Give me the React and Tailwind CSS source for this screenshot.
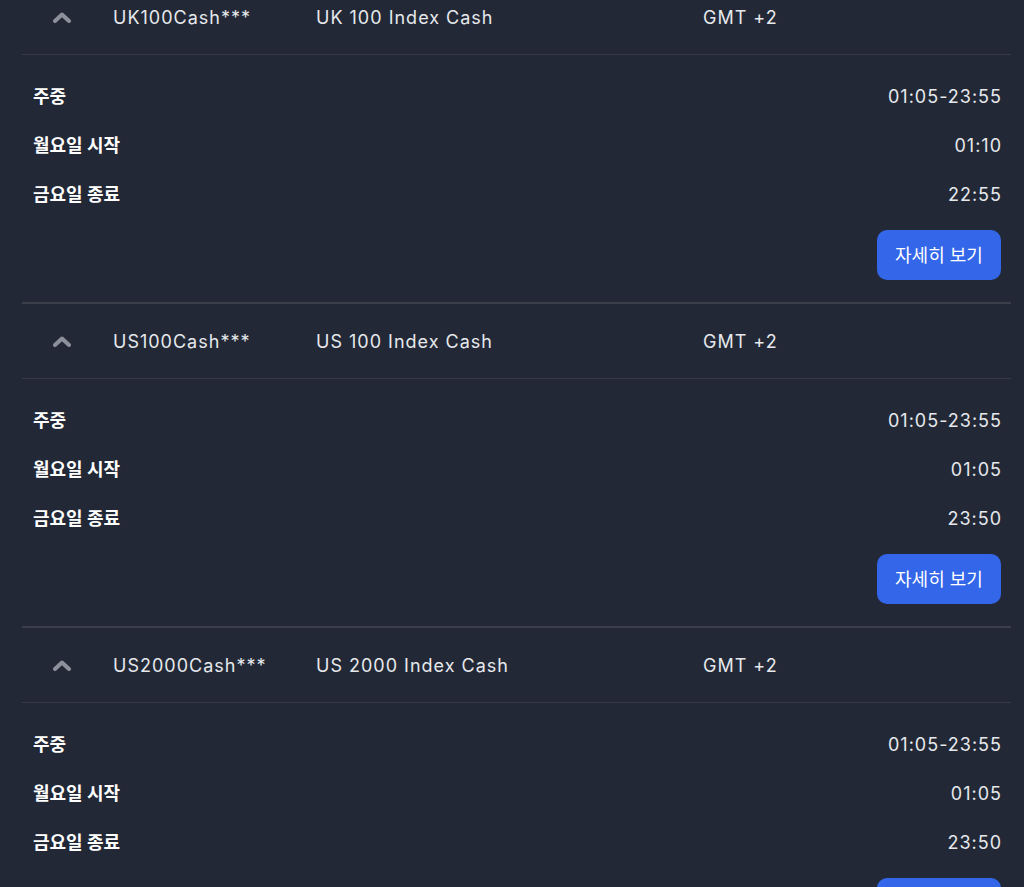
import React from 'react';

const items = [
    { code: 'UK100Cash***', name: 'UK 100 Index Cash', tz: 'GMT +2', week: '01:05-23:55', mon: '01:10', fri: '22:55' },
    { code: 'US100Cash***', name: 'US 100 Index Cash', tz: 'GMT +2', week: '01:05-23:55', mon: '01:05', fri: '23:50' },
    { code: 'US2000Cash***', name: 'US 2000 Index Cash', tz: 'GMT +2', week: '01:05-23:55', mon: '01:05', fri: '23:50' },
];

const ChevronUp = () => (
    <svg width="20" height="12" viewBox="0 0 20 12" fill="none">
        <path d="M3 10 L10 3.5 L17 10" stroke="#8b909a" strokeWidth="4" strokeLinecap="round" strokeLinejoin="round" />
    </svg>
);

const Row = ({ label, value }) => (
    <div className="flex items-center justify-between h-[49px]">
        <span className="font-bold text-white">{label}</span>
        <span className="text-[#e6e8ec] tracking-[1px] -mr-[1px]">{value}</span>
    </div>
);

const Section = ({ item }) => (
    <div className="border-b-2 border-[#3a3f4a]">
        {/* header */}
        <div className="flex items-center h-[75px] border-b border-[#363b47] text-[#e6e8ec] tracking-[1px]">
            <div className="w-[80px] flex justify-center"><ChevronUp /></div>
            <div className="w-[214px] pl-[11px]">{item.code}</div>
            <div className="w-[387px]">{item.name}</div>
            <div>{item.tz}</div>
        </div>
        {/* body */}
        <div className="pl-[11px] pr-[10px] pt-[17px] pb-[22px]">
            <Row label="주중" value={item.week} />
            <Row label="월요일 시작" value={item.mon} />
            <Row label="금요일 종료" value={item.fri} />
            <div className="flex justify-end mt-[11px]">
                <button className="h-[50px] w-[124px] rounded-[10px] bg-[#3366e8] text-white">자세히 보기</button>
            </div>
        </div>
    </div>
);

export default function App() {
    return (
        <div className="h-[887px] overflow-hidden bg-[#222836] text-[18px]" style={{ fontFamily: 'Inter, "Noto Sans CJK KR", sans-serif' }}>
            <div className="ml-[22px] mr-[13px] -mt-[20px]">
                {items.map(item => <Section key={item.code} item={item} />)}
            </div>
        </div>
    );
}
